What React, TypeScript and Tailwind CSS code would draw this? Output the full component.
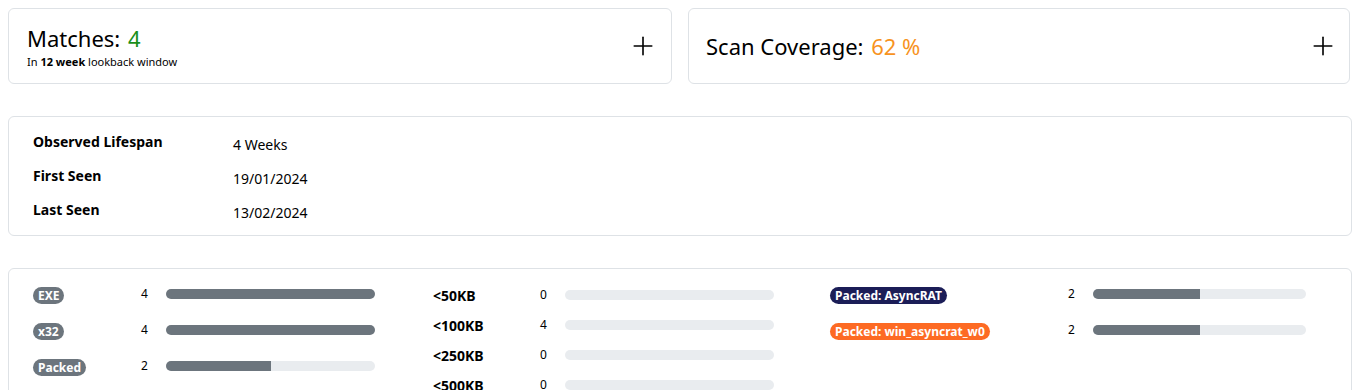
import { Plus } from "lucide-react";

type Row = { label: string; count: number; pct: number; badge?: string };

const typeRows: Row[] = [
    { label: "EXE", count: 4, pct: 100, badge: "bg-[#6c757d]" },
    { label: "x32", count: 4, pct: 100, badge: "bg-[#6c757d]" },
    { label: "Packed", count: 2, pct: 50, badge: "bg-[#6c757d]" },
];

const sizeRows: Row[] = [
    { label: "<50KB", count: 0, pct: 0 },
    { label: "<100KB", count: 4, pct: 0 },
    { label: "<250KB", count: 0, pct: 0 },
    { label: "<500KB", count: 0, pct: 0 },
];

const tagRows: Row[] = [
    { label: "Packed: AsyncRAT", count: 2, pct: 50, badge: "bg-[#1b1d57]" },
    { label: "Packed: win_asyncrat_w0", count: 2, pct: 50, badge: "bg-[#fd6a23]" },
];

function Bar({ pct, width }: { pct: number; width: string }) {
    return (
        <div className={`h-[10px] rounded-full bg-[#e9ecef] overflow-hidden ${width}`}>
            <div className="h-full bg-[#6c757d]" style={{ width: `${pct}%` }} />
        </div>
    );
}

function Badge({ text, color }: { text: string; color: string }) {
    return (
        <span className={`inline-block rounded-full px-[5px] text-[12px] leading-[17px] font-bold text-white ${color}`}>
            {text}
        </span>
    );
}

export default function App() {
    return (
        <div className="bg-white text-[#212529] pl-2 pr-[17px] pt-2" style={{ fontFamily: '"Noto Sans", sans-serif' }}>
            {/* Top summary cards */}
            <div className="grid grid-cols-[664px_662px] gap-4">
                <div className="h-[76px] border border-[#dee2e6] rounded-md flex items-center justify-between pl-[18px] pr-[13px]">
                    <div className="pt-[2px]">
                        <div className="text-[22px] leading-[26px] text-black">
                            Matches: <span className="ml-[2px] text-[#1a8f1a]">4</span>
                        </div>
                        <div className="text-[11px] leading-[16px] mt-[3px] text-black">
                            In <b>12 week</b> lookback window
                        </div>
                    </div>
                    <Plus className="w-[30px] h-[30px] text-black" strokeWidth={1.3} />
                </div>
                <div className="h-[76px] border border-[#dee2e6] rounded-md flex items-center justify-between pl-[17px] pr-[11px]">
                    <div className="text-[22px] leading-[26px] text-black">
                        Scan Coverage: <span className="ml-[2px] text-[#f7931e]">62 %</span>
                    </div>
                    <Plus className="w-[30px] h-[30px] text-black" strokeWidth={1.3} />
                </div>
            </div>

            {/* Lifespan */}
            <div className="mt-8 h-[120px] border border-[#dee2e6] rounded-md px-6 pt-[15px] flex flex-col gap-[11px] text-black">
                {[
                    ["Observed Lifespan", "4 Weeks"],
                    ["First Seen", "19/01/2024"],
                    ["Last Seen", "13/02/2024"],
                ].map(([k, v]) => (
                    <div key={k} className="flex text-[14px] leading-[20px]">
                        <div className="w-[200px] font-bold">{k}</div>
                        <div className="pt-[3px]">{v}</div>
                    </div>
                ))}
            </div>

            {/* Breakdown */}
            <div className="mt-8 h-[140px] border border-[#dee2e6] rounded-md pl-6 pt-4 grid grid-cols-[400px_397px_1fr] text-black">
                <div className="flex flex-col gap-[19px]">
                    {typeRows.map((r) => (
                        <div key={r.label} className="flex items-center h-[17px]">
                            <div className="w-[108px]"><Badge text={r.label} color={r.badge!} /></div>
                            <div className="w-[25px] text-[12px]">{r.count}</div>
                            <Bar pct={r.pct} width="w-[209px]" />
                        </div>
                    ))}
                </div>
                <div className="flex flex-col gap-[10px]">
                    {sizeRows.map((r) => (
                        <div key={r.label} className="flex items-center h-[20px]">
                            <div className="w-[107px] text-[14px] font-bold">{r.label}</div>
                            <div className="w-[25px] text-[12px]">{r.count}</div>
                            <Bar pct={r.pct} width="w-[209px]" />
                        </div>
                    ))}
                </div>
                <div className="flex flex-col gap-[19px]">
                    {tagRows.map((r) => (
                        <div key={r.label} className="flex items-center h-[17px]">
                            <div className="w-[238px]"><Badge text={r.label} color={r.badge!} /></div>
                            <div className="w-[25px] text-[12px]">{r.count}</div>
                            <Bar pct={r.pct} width="w-[213px]" />
                        </div>
                    ))}
                </div>
            </div>
        </div>
    );
}
